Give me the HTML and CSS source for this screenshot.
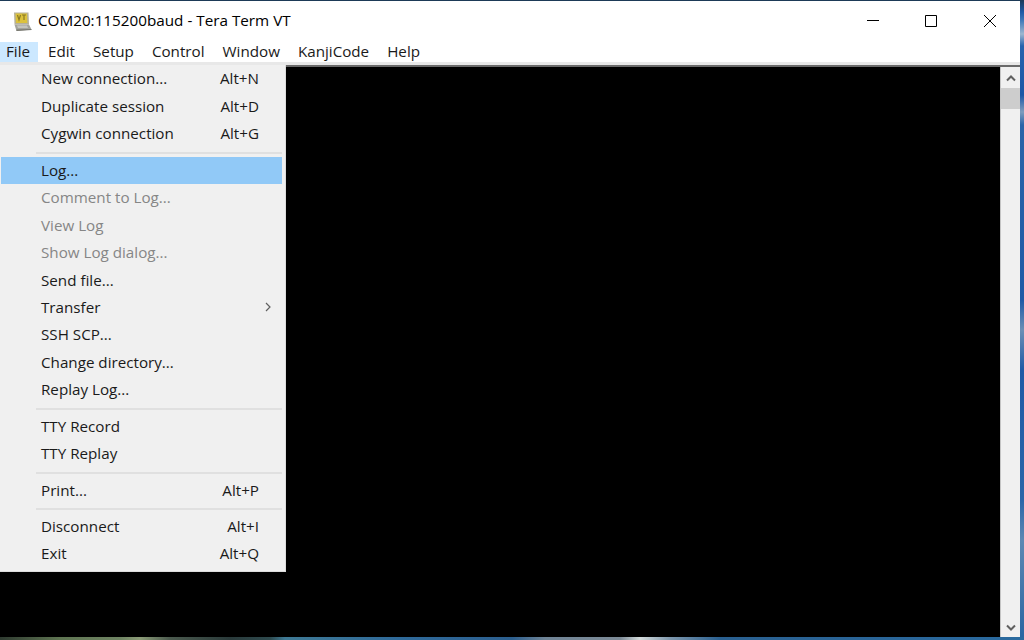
FILE: index.html
```html
<!DOCTYPE html>
<html lang="en">
<head>
<meta charset="utf-8">
<title>Tera Term VT</title>
<link rel="stylesheet" href="styles.css">
</head>
<body>
<div class="window">
  <header class="titlebar">
    <svg class="app-icon" width="20" height="20" viewBox="0 0 20 20">
      <path d="M2 1.500h14.500l.5 12H2.500z" fill="#b5b09a"/>
      <path d="M3.500 2.500h11.500l.3 9.500H4z" fill="#dcc23c"/>
      <path d="M5.500 4l1.500 5 1.500-5M10 4h4M12 4v5" stroke="#8a7a22" stroke-width="1.200" fill="none"/>
      <path d="M2.500 13.500h14.500l2.500 5-15 1.500z" fill="#a3a39c"/>
      <path d="M4.500 18.500l15-.5v1l-15 1z" fill="#77776f"/>
      <path d="M5 14.500h10l1 2.500H6z" fill="#c4c4bd"/>
    </svg>
    <span class="title">COM20:115200baud - Tera Term VT</span>
    <div class="controls">
      <svg width="12" height="12" viewBox="0 0 12 12" class="ctl min"><path d="M0 5.500h12" stroke="#000" fill="none"/></svg>
      <svg width="12" height="12" viewBox="0 0 12 12" class="ctl max"><path d="M.5.500h11v11H.5z" stroke="#000" fill="none"/></svg>
      <svg width="12" height="12" viewBox="0 0 12 12" class="ctl close"><path d="M0 0l12 12M12 0L0 12" stroke="#000" fill="none"/></svg>
    </div>
  </header>
  <nav class="menubar">
    <span class="top active">File</span><span class="top">Edit</span><span class="top">Setup</span><span class="top">Control</span><span class="top">Window</span><span class="top">KanjiCode</span><span class="top">Help</span>
  </nav>
  <div class="client">
    <div class="terminal"></div>
    <div class="scrollbar">
      <svg class="arrow up" width="10" height="7" viewBox="0 0 10 7"><path d="M1 5.500l4-4 4 4" stroke="#606060" stroke-width="2" fill="none"/></svg>
      <div class="thumb"></div>
      <div class="track"></div>
      <svg class="arrow down" width="10" height="7" viewBox="0 0 10 7"><path d="M1 1.500l4 4 4-4" stroke="#606060" stroke-width="2" fill="none"/></svg>
    </div>
  </div>
  <div class="menu">
    <div class="item"><span>New connection...</span><span>Alt+N</span></div>
    <div class="item"><span>Duplicate session</span><span>Alt+D</span></div>
    <div class="item"><span>Cygwin connection</span><span>Alt+G</span></div>
    <div class="sep"></div>
    <div class="item hot"><span>Log...</span></div>
    <div class="item off"><span>Comment to Log...</span></div>
    <div class="item off"><span>View Log</span></div>
    <div class="item off"><span>Show Log dialog...</span></div>
    <div class="item"><span>Send file...</span></div>
    <div class="item"><span>Transfer</span><svg class="sub" width="6" height="10" viewBox="0 0 6 10"><path d="M1 1l4 4-4 4" stroke="#606060" stroke-width="1.200" fill="none"/></svg></div>
    <div class="item"><span>SSH SCP...</span></div>
    <div class="item"><span>Change directory...</span></div>
    <div class="item"><span>Replay Log...</span></div>
    <div class="sep"></div>
    <div class="item"><span>TTY Record</span></div>
    <div class="item"><span>TTY Replay</span></div>
    <div class="sep"></div>
    <div class="item"><span>Print...</span><span>Alt+P</span></div>
    <div class="sep"></div>
    <div class="item"><span>Disconnect</span><span>Alt+I</span></div>
    <div class="item"><span>Exit</span><span>Alt+Q</span></div>
  </div>
</div>
</body>
</html>
```
FILE: styles.css
```css
* { box-sizing: border-box; }
html, body { margin: 0; height: 100%; }
body {
  width: 1024px;
  height: 640px;
  overflow: hidden;
  background:
    linear-gradient(180deg, #1d3a57 0, #1f5aa6 12px, #3f78b8 20px, #9db6cf 34px, #2763ad 46px, #1c57a6 95px, #7f9cbd 112px, #2a64a8 125px, #1f5aa6 300px, #6b8fb5 330px, #1f5aa6 370px, #2b66a8 500px, #5d88b3 540px, #2a66a2 637px) right top / 4px 637px no-repeat,
    linear-gradient(90deg, #2e3a30 0, #5f7552 60px, #6f8463 120px, #8c9c78 140px, #4b5a4e 170px, #2a3a3a 230px, #2e4a4e 270px, #3f7a95 285px, #2f6a9a 400px, #2c5f8f 512px, #6f8496 545px, #7c8a96 620px, #d5dcdc 640px, #7f98ad 670px, #2a6090 720px, #2a6a9f 1024px);
  font-family: "Open Sans", "Noto Sans", sans-serif;
  font-size: 15.2px;
  color: #1a1a1a;
}
.window {
  position: relative;
  width: 1020px;
  height: 637px;
  display: flex;
  flex-direction: column;
  background: #fff;
  border-top: 1px solid #1d3a57;
}
.titlebar {
  height: 41px;
  flex: none;
  display: flex;
  align-items: center;
  padding: 0 0 2px 12px;
  background: #fff;
}
.app-icon { flex: none; margin-right: 6px; }
.title { color: #000; font-size: 15.25px; padding-bottom: 2px; }
.controls { margin-left: auto; display: flex; align-items: center; }
.ctl { flex: none; }
.min { margin-right: 46px; }
.max { margin-right: 47px; }
.close { margin-right: 24px; }
.menubar {
  height: 23px;
  flex: none;
  display: flex;
  align-items: stretch;
  gap: 4px;
  background: #fff;
  border-bottom: 3px solid #e8e8e8;
}
.top {
  display: flex;
  align-items: center;
  padding: 0 8px 2px 6px;
  color: #1a1a1a;
}
.top.active { background: #cce8ff; }
.client {
  flex: 1;
  display: flex;
  min-height: 0;
  border-top: 2px solid #6a6a6a;
}
.terminal { flex: 1; background: #000; }
.scrollbar {
  width: 20px;
  flex: none;
  background: #f0f0f0;
  border-left: 1px solid #c4c4c4;
  display: flex;
  flex-direction: column;
  align-items: center;
}
.arrow { flex: none; }
.arrow.up { margin: 8px 0 6px; }
.arrow.down { margin: 0 0 6px; }
.thumb { width: 100%; height: 21px; background: #cdcdcd; flex: none; }
.track { flex: 1; }
.menu {
  position: absolute;
  left: 0;
  top: 64px;
  width: 286px;
  height: 507px;
  background: #f0f0f0;
  border-right: 1px solid #dcdcdc;
  border-bottom: 1px solid #dcdcdc;
  padding: 0.5px 3px 0 0;
}
.item {
  height: 27.45px;
  display: flex;
  align-items: center;
  justify-content: space-between;
  padding: 0 23px 1.5px 41px;
}
.item.hot { background: #91c9f7; margin-left: 1px; padding-left: 40px; }
.item.off { color: #868686; }
.sub { margin-right: -12px; }
.sep {
  height: 9px;
  margin-left: 36px;
  position: relative;
}
.sep::after {
  content: "";
  position: absolute;
  left: 0;
  right: 0;
  top: 4px;
  height: 2px;
  background: #e0e0e0;
}
```
